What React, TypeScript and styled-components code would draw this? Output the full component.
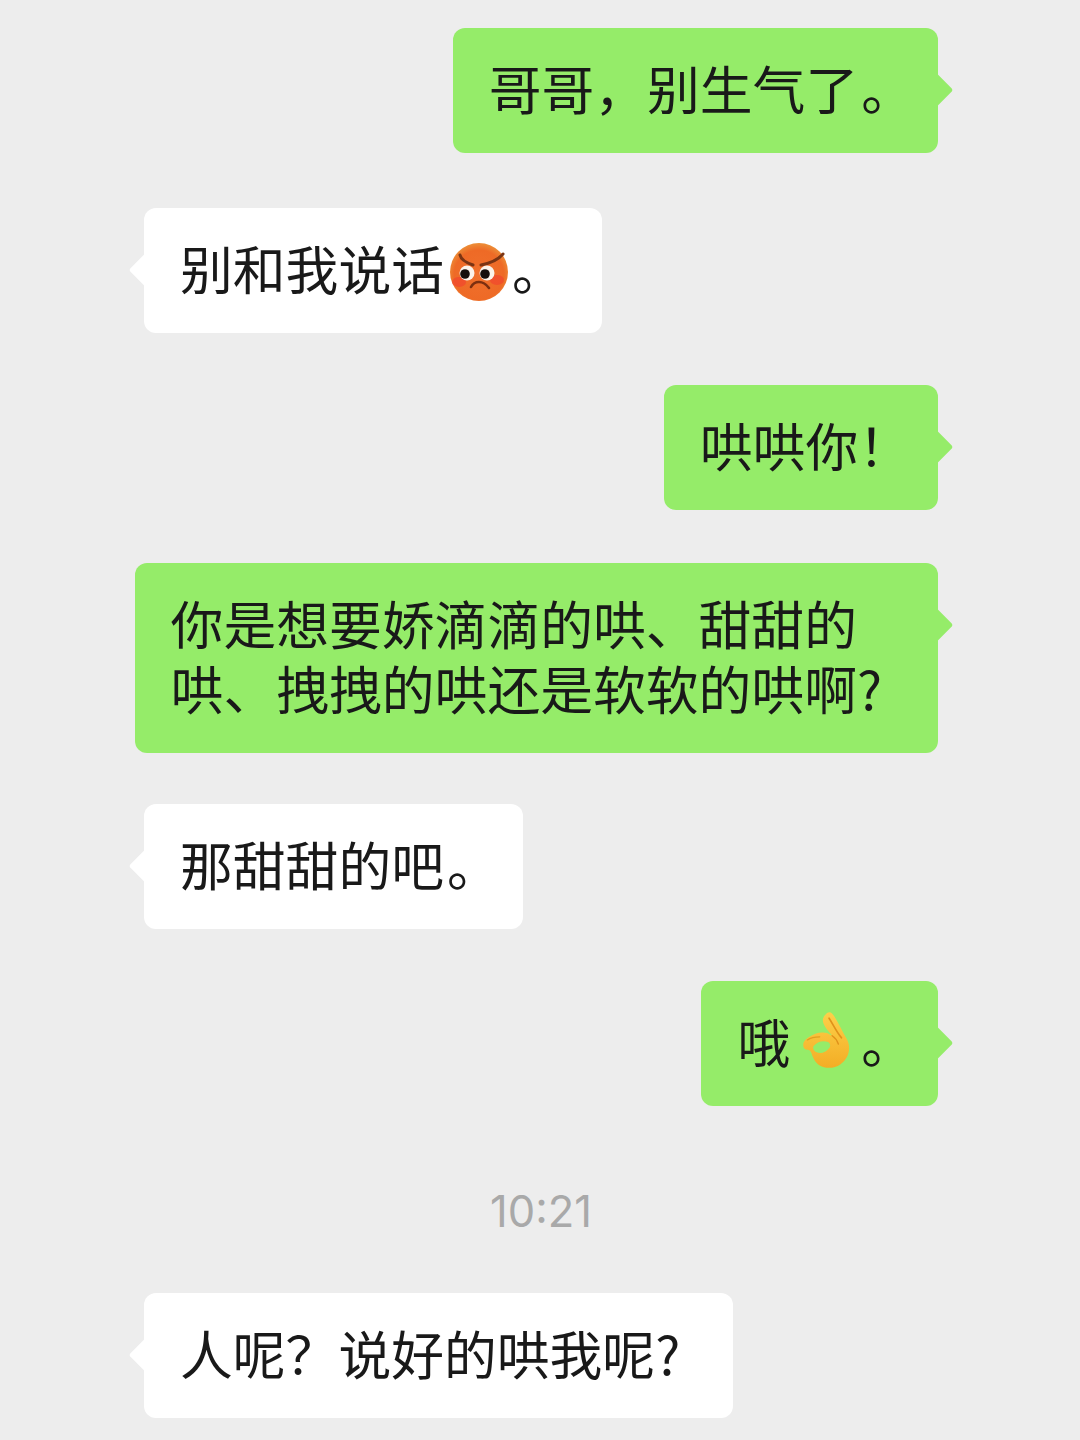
import React from 'react';
import styled, { createGlobalStyle } from 'styled-components';

const GlobalStyle = createGlobalStyle`
  html,
  body {
    margin: 0;
    padding: 0;
    background-color: #ededed;
  }
`;

const AngryFace = () => (
  <EmojiSvg $width={58} $height={58} $drop={11} $before={6} $after={4} viewBox="0 0 58 58" aria-hidden="true">
    <defs>
      <radialGradient id="angryFill" cx="50%" cy="55%" r="55%">
        <stop offset="0%" stopColor="#f0702c" />
        <stop offset="78%" stopColor="#ee6a26" />
        <stop offset="100%" stopColor="#ec8f38" />
      </radialGradient>
    </defs>
    <circle cx="29" cy="29" r="29" fill="url(#angryFill)" />
    <ellipse cx="9" cy="39" rx="7" ry="5" fill="#f2402e" opacity="0.6" />
    <ellipse cx="47" cy="37" rx="7" ry="5" fill="#f2402e" opacity="0.6" />
    <path d="M10 12c1 5 7 8 13 10" fill="none" stroke="#7a3413" strokeWidth="3" strokeLinecap="round" />
    <path d="M53 11c-5 6-12 9-22 11" fill="none" stroke="#7a3413" strokeWidth="3" strokeLinecap="round" />
    <ellipse cx="17" cy="30" rx="7.5" ry="7.5" fill="#fbf3ea" />
    <ellipse cx="37" cy="30" rx="7.5" ry="7.5" fill="#fbf3ea" />
    <circle cx="15" cy="31" r="4.8" fill="#17100c" />
    <circle cx="35" cy="31" r="4.8" fill="#17100c" />
    <path d="M21 44c2-4 5-5 8-5 4 0 7 2 10 6" fill="none" stroke="#7c2f10" strokeWidth="2.6" strokeLinecap="round" />
  </EmojiSvg>
);

const OkHand = () => (
  <EmojiSvg $width={50} $height={62} $drop={11} $before={12} $after={6} viewBox="13 9 48 60" aria-hidden="true">
    <defs>
      <linearGradient id="okFill" x1="0" y1="0" x2="0" y2="1">
        <stop offset="0%" stopColor="#fdd04a" />
        <stop offset="100%" stopColor="#f3ad25" />
      </linearGradient>
    </defs>
    <path
      d="M14 41c0-4 3-6 6-8 4-3 10-5 15-4 3 0 5 2 7 3-4-5-9-10-9-15 0-3 2-5 4-7 3-2 5 0 7 3 4 6 8 15 12 22 3 5 3 11 1 16-3 7-10 12-18 12-7 0-12-3-15-9-2-4-2-7-4-8-3 0-6-1-6-5z"
      fill="url(#okFill)"
    />
    <path d="M24 42c3-4 9-6 14-4 2 1 3 4 1 6-3 4-8 6-12 4-3-1-4-4-3-6z" fill="#95ec69" />
    <path d="M39 15c4 6 7 13 12 19" fill="none" stroke="#e0921a" strokeWidth="1.6" strokeLinecap="round" />
    <path d="M42 32c3 2 5 5 6 8" fill="none" stroke="#e0921a" strokeWidth="1.4" strokeLinecap="round" />
    <path d="M18 36c3-2 8-3 12-3" fill="none" stroke="#e0a021" strokeWidth="1.2" strokeLinecap="round" />
  </EmojiSvg>
);

export default function App() {
  return (
    <Page>
      <GlobalStyle />
      <Row $gap={55} $mine>
        <Bubble $mine>
          哥哥，别生气了<Stop>。</Stop>
        </Bubble>
      </Row>
      <Row $gap={52}>
        <Bubble $paddingRight={37}>
          别和我说话
          <AngryFace />。
        </Bubble>
      </Row>
      <Row $gap={53} $mine>
        <Bubble $mine>哄哄你！</Bubble>
      </Row>
      <Row $gap={51} $mine>
        <Bubble $mine $paddingRight={56}>
          你是想要娇滴滴的哄、甜甜的
          <br />
          哄、拽拽的哄还是软软的哄啊?
        </Bubble>
      </Row>
      <Row $gap={52}>
        <Bubble>
          那甜甜的吧<Stop>。</Stop>
        </Bubble>
      </Row>
      <Row $gap={81} $mine>
        <Bubble $mine>
          哦
          <OkHand />
          <Stop>。</Stop>
        </Bubble>
      </Row>
      <TimeStamp>10:21</TimeStamp>
      <Row $gap={0}>
        <Bubble $paddingRight={53}>人呢？说好的哄我呢?</Bubble>
      </Row>
    </Page>
  );
}

const Page = styled.main`
  display: flex;
  flex-direction: column;
  width: 1080px;
  height: 1440px;
  padding: 28px 142px 0 144px;
  box-sizing: border-box;
  overflow: hidden;
  background-color: #ededed;
  font-family: 'Noto Sans CJK SC', 'Noto Sans', sans-serif;
`;

const Row = styled.div<{ $mine?: boolean; $gap: number }>`
  display: flex;
  justify-content: ${({ $mine }) => ($mine ? 'flex-end' : 'flex-start')};
  margin-bottom: ${({ $gap }) => $gap}px;
`;

const Bubble = styled.div<{ $mine?: boolean; $paddingRight?: number }>`
  position: relative;
  flex-shrink: 0;
  padding: 27px ${({ $mine, $paddingRight }) => $paddingRight ?? ($mine ? 27 : 26)}px 33px 36px;
  border-radius: 12px;
  background-color: ${({ $mine }) => ($mine ? '#95ec69' : '#ffffff')};
  font-size: 52.8px;
  line-height: 65px;
  white-space: nowrap;
  color: #191919;

  &::after {
    content: '';
    position: absolute;
    top: 49px;
    ${({ $mine }) => ($mine ? 'right: -10px' : 'left: -10px')};
    width: 26px;
    height: 26px;
    border-radius: 3px;
    transform: rotate(45deg);
    background-color: inherit;
  }
`;

const Stop = styled.span`
  margin: 0 -3px 0 3px;
`;

// negative block margins keep the picture from stretching the text line
const EmojiSvg = styled.svg<{ $width: number; $height: number; $drop: number; $before: number; $after: number }>`
  display: inline-block;
  width: ${({ $width }) => $width}px;
  height: ${({ $height }) => $height}px;
  margin: -20px ${({ $after }) => $after}px -20px ${({ $before }) => $before}px;
  vertical-align: ${({ $drop }) => 20 - $drop}px;
`;

const TimeStamp = styled.div`
  height: 126px;
  margin-top: -20px;
  text-align: center;
  font-family: 'Inter', 'Liberation Sans', sans-serif;
  font-size: 43.5px;
  line-height: 88px;
  color: #a9a9a9;
`;
